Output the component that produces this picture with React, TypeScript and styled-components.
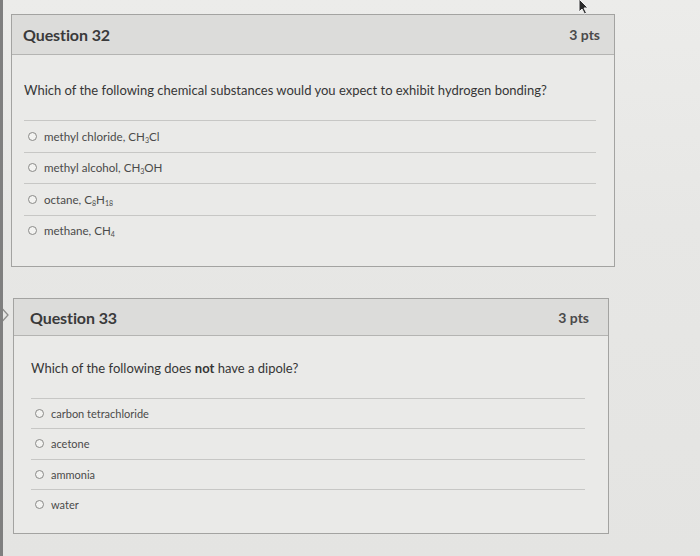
import { createGlobalStyle, styled } from "styled-components";

const GlobalStyle = createGlobalStyle`
  html, body {
    margin: 0;
    padding: 0;
    background: #e7e7e5;
  }
  body {
    font-family: Lato, "Open Sans", "Liberation Sans", sans-serif;
    color: #3b3b3b;
  }
`;

const Page = styled.div`
  position: relative;
  width: 700px;
  height: 556px;
  box-sizing: border-box;
  border-left: 3px solid #7f7f7f;
  background: linear-gradient(180deg, #ececea 0%, #e7e7e5 40%, #e4e4e2 100%);
  padding-top: 14px;
  overflow: hidden;
`;

const QuestionRow = styled.div<{ $top: number }>`
  display: flex;
  align-items: flex-start;
  margin-top: ${(p) => p.$top}px;
`;

const FlagSlot = styled.div<{ $w: number }>`
  width: ${(p) => p.$w}px;
  flex: none;
  padding-top: 8px;
  margin-left: -3px;
`;

const Card = styled.div<{ $w: number }>`
  width: ${(p) => p.$w}px;
  box-sizing: border-box;
  border: 1px solid #a3a3a1;
  background: #eaeae8;
`;

const Header = styled.div<{ $h: number; $pad: number }>`
  height: ${(p) => p.$h}px;
  box-sizing: border-box;
  display: flex;
  align-items: center;
  justify-content: space-between;
  padding: 0 ${(p) => p.$pad + 3}px 0 ${(p) => p.$pad}px;
  background: #dcdcda;
  border-bottom: 1px solid #b4b4b2;
`;

const Title = styled.div`
  font-size: 16px;
  font-weight: 700;
  color: #3a3a3a;
  letter-spacing: -0.1px;
`;

const Points = styled.div`
  font-size: 14px;
  font-weight: 700;
  color: #4a4a4a;
`;

const Body = styled.div<{ $pad: number; $top: number; $bottom: number }>`
  padding: ${(p) => p.$top}px ${(p) => p.$pad + 6}px ${(p) => p.$bottom}px
    ${(p) => p.$pad}px;
`;

const Prompt = styled.div<{ $gap: number }>`
  font-size: 13px;
  line-height: 16px;
  color: #363636;
  margin-bottom: ${(p) => p.$gap}px;

  strong {
    font-weight: 700;
  }
`;

const Answers = styled.div``;

const Answer = styled.label<{ $h: number; $size: number }>`
  height: ${(p) => p.$h}px;
  box-sizing: border-box;
  display: flex;
  align-items: center;
  gap: 7px;
  padding-left: 4px;
  border-top: 1px solid #c7c7c5;
  font-size: ${(p) => p.$size}px;
  color: #4a4a4a;

  sub {
    font-size: 7px;
    vertical-align: -2px;
    line-height: 0;
  }
`;

const Radio = styled.span`
  width: 9px;
  height: 9px;
  flex: none;
  box-sizing: border-box;
  border-radius: 50%;
  border: 1.3px solid #8a8a88;
  background: #f3f3f1;
`;

const Cursor = styled.svg`
  position: absolute;
  left: 574px;
  top: -2px;
`;

function Flag() {
  return (
    <svg width="10" height="14" viewBox="0 0 10 14">
      <path
        d="M-4 1.5 H3 L8 7 L3 12.5 H-4"
        fill="none"
        stroke="#8e8e8c"
        strokeWidth="1.3"
      />
    </svg>
  );
}

type Q = {
  title: string;
  prompt: React.ReactNode;
  answers: React.ReactNode[];
  top: number;
  indent: number;
  width: number;
  headerH: number;
  pad: number;
  bodyTop: number;
  bodyBottom: number;
  gap: number;
  rowH: number;
  size: number;
  flag?: boolean;
};

const questions: Q[] = [
  {
    title: "Question 32",
    prompt:
      "Which of the following chemical substances would you expect to exhibit hydrogen bonding?",
    answers: [
      <>methyl chloride, CH<sub>3</sub>Cl</>,
      <>methyl alcohol, CH<sub>3</sub>OH</>,
      <>octane, C<sub>8</sub>H<sub>18</sub></>,
      <>methane, CH<sub>4</sub></>,
    ],
    top: 0,
    indent: 11,
    width: 604,
    headerH: 40,
    pad: 11,
    bodyTop: 27,
    bodyBottom: 20,
    gap: 22,
    rowH: 31.5,
    size: 11.6,
  },
  {
    title: "Question 33",
    prompt: (
      <>
        Which of the following does <strong>not</strong> have a dipole?
      </>
    ),
    answers: ["carbon tetrachloride", "acetone", "ammonia", "water"],
    top: 31,
    indent: 13,
    width: 596,
    headerH: 37,
    pad: 16,
    bodyTop: 24,
    bodyBottom: 14,
    gap: 22,
    rowH: 30.3,
    size: 11,
    flag: true,
  },
];

export default function App() {
  return (
    <>
      <GlobalStyle />
      <Page>
        <Cursor width="14" height="18" viewBox="0 0 14 18">
          <path d="M2 1 L2 14 L5 11 L7.5 16 L9.5 15 L7 10 L11 10 Z" fill="#2a2a2a" stroke="#f2f2f2" strokeWidth="1" />
        </Cursor>
        {questions.map((q) => (
          <QuestionRow key={q.title} $top={q.top}>
            <FlagSlot $w={q.indent}>{q.flag && <Flag />}</FlagSlot>
            <Card $w={q.width}>
              <Header $h={q.headerH} $pad={q.pad}>
                <Title>{q.title}</Title>
                <Points>3 pts</Points>
              </Header>
              <Body $pad={q.pad + 1} $top={q.bodyTop} $bottom={q.bodyBottom}>
                <Prompt $gap={q.gap}>{q.prompt}</Prompt>
                <Answers>
                  {q.answers.map((a, i) => (
                    <Answer key={i} $h={q.rowH} $size={q.size}>
                      <Radio />
                      <span>{a}</span>
                    </Answer>
                  ))}
                </Answers>
              </Body>
            </Card>
          </QuestionRow>
        ))}
      </Page>
    </>
  );
}
